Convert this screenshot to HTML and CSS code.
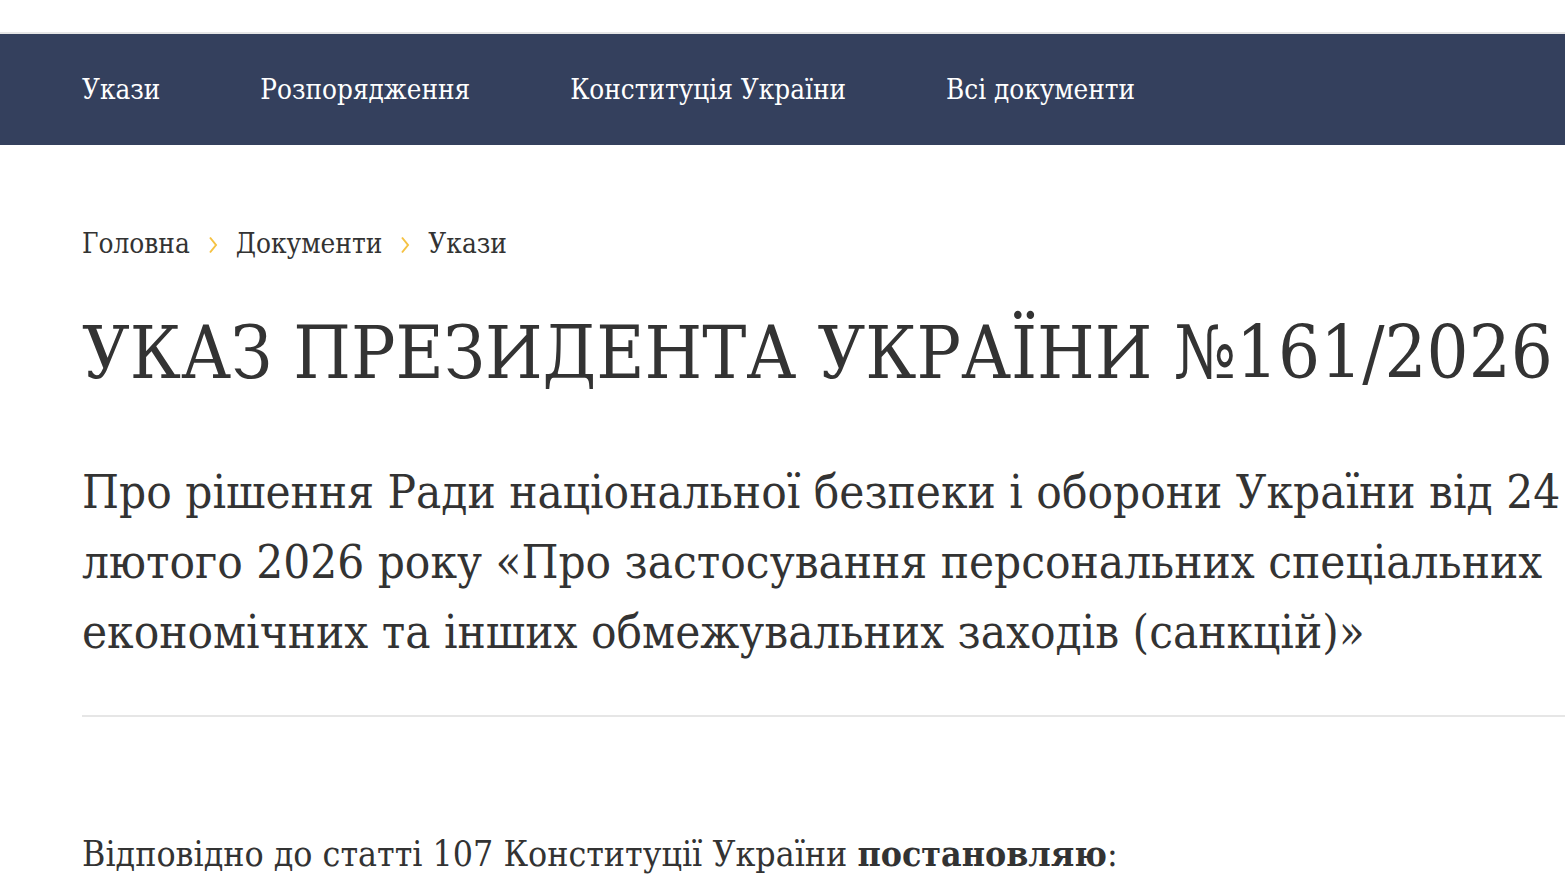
FILE: index.html
```html
<!DOCTYPE html>
<html lang="uk">
<head>
  <meta charset="UTF-8">
  <title>Указ Президента України №161/2026</title>
  <link rel="stylesheet" href="styles.css">
</head>
<body>

<div class="topline"></div>

<nav class="menu">
  <a href="#">Укази</a>
  <a href="#">Розпорядження</a>
  <a href="#">Конституція України</a>
  <a href="#">Всі документи</a>
</nav>

<div class="page">
  <div class="crumbs">
    <a href="#">Головна</a>
    <svg class="sep" width="10" height="18" viewBox="0 0 10 18"><path d="M2 1.5 L8 9 L2 16.5" fill="none" stroke="#f5c243" stroke-width="2"/></svg>
    <a href="#">Документи</a>
    <svg class="sep" width="10" height="18" viewBox="0 0 10 18"><path d="M2 1.5 L8 9 L2 16.5" fill="none" stroke="#f5c243" stroke-width="2"/></svg>
    <a href="#">Укази</a>
  </div>

  <h1>УКАЗ ПРЕЗИДЕНТА УКРАЇНИ №161/2026</h1>

  <h2>Про рішення Ради національної безпеки і оборони України від 24<br>
  лютого 2026 року «Про застосування персональних спеціальних<br>
  економічних та інших обмежувальних заходів (санкцій)»</h2>

  <hr>

  <div class="text">
    <p>Відповідно до статті 107 Конституції України <b>постановляю</b>:</p>
  </div>
</div>

</body>
</html>
```

FILE: styles.css
```css
body {
  margin: 0;
  font-family: "DejaVu Serif Condensed", "DejaVu Serif", serif;
  font-stretch: semi-condensed;
  color: #333;
  background: #fff;
  overflow: hidden;
}
.topline {
  height: 32px;
  border-bottom: 2px solid #e6e6e6;
}
.menu {
  display: flex;
  gap: 100px;
  height: 111px;
  align-items: center;
  padding: 0 82px;
  background-color: #34405d;
}
.menu a {
  color: #fff;
  text-decoration: none;
  font-size: 27.6px;
}
.page {
  padding: 0 0 0 82px;
}
.crumbs {
  margin-top: 82px;
  font-size: 27.7px;
  display: flex;
  align-items: center;
  gap: 18px;
}
.crumbs a {
  color: #333;
  text-decoration: none;
}
.sep {
  margin-top: 2px;
}
h1 {
  font-weight: normal;
  font-size: 73.5px;
  margin: 50px 0 0;
  white-space: nowrap;
}
h2 {
  font-weight: normal;
  font-size: 47.2px;
  line-height: 70px;
  margin: 62px 0 0;
  white-space: nowrap;
}
hr {
  border: 0;
  border-top: 2px solid #e6e6e6;
  margin: 48px 0 0;
}
.text {
  margin-top: 116px;
  font-size: 35.4px;
}
.text p {
  margin: 0;
}
```
